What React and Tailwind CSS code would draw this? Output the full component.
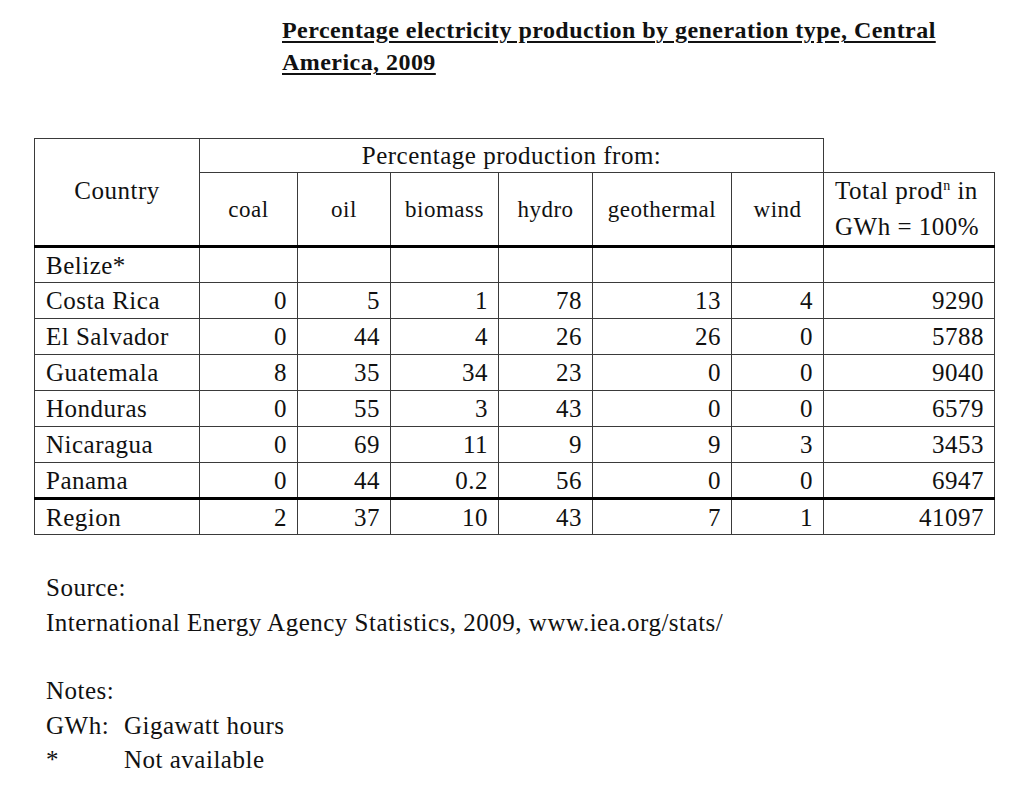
import React from 'react';

const rows = [
  ['Belize*', '', '', '', '', '', '', ''],
  ['Costa Rica', '0', '5', '1', '78', '13', '4', '9290'],
  ['El Salvador', '0', '44', '4', '26', '26', '0', '5788'],
  ['Guatemala', '8', '35', '34', '23', '0', '0', '9040'],
  ['Honduras', '0', '55', '3', '43', '0', '0', '6579'],
  ['Nicaragua', '0', '69', '11', '9', '9', '3', '3453'],
  ['Panama', '0', '44', '0.2', '56', '0', '0', '6947'],
];

const region = ['Region', '2', '37', '10', '43', '7', '1', '41097'];

const widths = ['w-[165px]', 'w-[98px]', 'w-[93px]', 'w-[108px]', 'w-[94px]', 'w-[139px]', 'w-[92px]', 'w-[171px]'];

function DataRow({ cells, thickTop }) {
  return (
    <tr className="h-[36px]">
      {cells.map((c, i) => (
        <td
          key={i}
          className={
            'border border-[#3a3a3a] leading-none ' +
            (thickTop ? 'border-t-[3px] border-t-black ' : '') +
            (i === 0 ? 'text-left pl-[11px]' : 'text-right pr-[10px]')
          }
        >
          {c}
        </td>
      ))}
    </tr>
  );
}

export default function App() {
  return (
    <div className="w-[1024px] h-[794px] bg-white text-[#111] font-['Liberation_Serif','Times_New_Roman',serif] overflow-hidden">
      <div className="pl-[282px] pt-[14px] text-[24px] leading-[32px] font-bold underline underline-offset-[3px] decoration-[2px] tracking-[0.45px]">
        <div>Percentage electricity production by generation type, Central</div>
        <div>America, 2009</div>
      </div>

      <table className="ml-[34px] mt-[60px] table-fixed border-collapse w-[961px] text-[25px] tracking-[0.5px]">
        <colgroup>
          {widths.map((w, i) => (
            <col key={i} className={w} />
          ))}
        </colgroup>
        <thead>
          <tr className="h-[34px]">
            <th rowSpan={2} className="border border-[#3a3a3a] border-b-[3px] border-b-black font-normal text-center align-middle pb-[2px]">
              Country
            </th>
            <th colSpan={6} className="border border-[#3a3a3a] font-normal text-center leading-none">
              Percentage production from:
            </th>
            <th className="border-0"></th>
          </tr>
          <tr className="h-[71px] text-[23px]">
            {['coal', 'oil', 'biomass', 'hydro', 'geothermal', 'wind'].map((h) => (
              <th key={h} className="border border-[#3a3a3a] border-b-[3px] border-b-black font-normal text-center leading-none">
                {h}
              </th>
            ))}
            <th className="border border-[#3a3a3a] border-b-[3px] border-b-black font-normal text-left pl-[11px] text-[25px] leading-[36px] whitespace-nowrap">
              <div>
                Total prod<span className="text-[14px] leading-none relative -top-[9px]">n</span> in
              </div>
              <div>GWh = 100%</div>
            </th>
          </tr>
        </thead>
        <tbody>
          {rows.map((r) => (
            <DataRow key={r[0]} cells={r} />
          ))}
          <DataRow cells={region} thickTop />
        </tbody>
      </table>

      <div className="pl-[46px] pt-[36px] text-[25px] leading-[34.5px] tracking-[0.5px]">
        <div>Source:</div>
        <div>International Energy Agency Statistics, 2009, www.iea.org/stats/</div>
        <div className="mt-[34px]">Notes:</div>
        <div className="flex">
          <span className="w-[78px] shrink-0">GWh:</span>
          <span>Gigawatt hours</span>
        </div>
        <div className="flex">
          <span className="w-[78px] shrink-0">*</span>
          <span>Not available</span>
        </div>
      </div>
    </div>
  );
}
